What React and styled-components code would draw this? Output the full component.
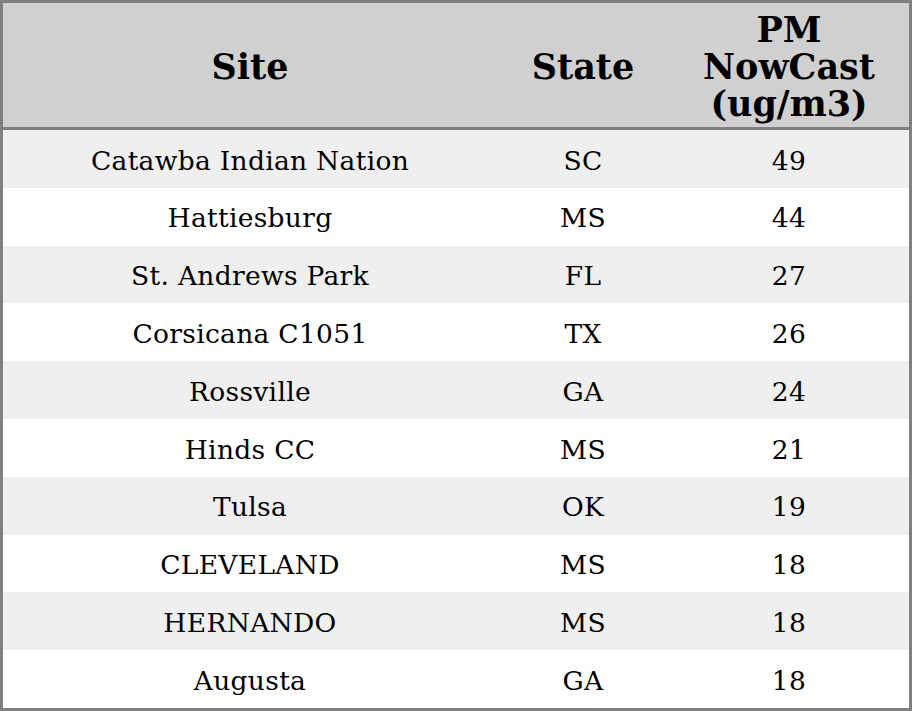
import React from "react";
import styled, { createGlobalStyle } from "styled-components";

const Global = createGlobalStyle`
  html, body { margin: 0; padding: 0; background: #fff; }
  * { box-sizing: border-box; }
`;

const rows = [
  ["Catawba Indian Nation", "SC", "49"],
  ["Hattiesburg", "MS", "44"],
  ["St. Andrews Park", "FL", "27"],
  ["Corsicana C1051", "TX", "26"],
  ["Rossville", "GA", "24"],
  ["Hinds CC", "MS", "21"],
  ["Tulsa", "OK", "19"],
  ["CLEVELAND", "MS", "18"],
  ["HERNANDO", "MS", "18"],
  ["Augusta", "GA", "18"],
];

const Table = styled.div`
  width: 912px;
  height: 711px;
  border: 3px solid #808080;
  display: grid;
  grid-template-rows: 127px repeat(10, 1fr);
  font-family: "DejaVu Serif", serif;
  color: #000;
`;

const Row = styled.div`
  display: grid;
  grid-template-columns: 494px 172px 1fr;
  background: ${(p) => (p.$head ? "#d0d0d0" : p.$alt ? "#efefef" : "#ffffff")};
  border-bottom: ${(p) => (p.$head ? "3px solid #808080" : "none")};
`;

const Cell = styled.div`
  display: flex;
  align-items: center;
  justify-content: center;
  text-align: center;
  font-size: ${(p) => (p.$head ? "35px" : "26.5px")};
  font-weight: ${(p) => (p.$head ? 700 : 400)};
  letter-spacing: ${(p) => (p.$head ? "0" : "0.3px")};
  line-height: ${(p) => (p.$head ? "37px" : "1")};
  padding-top: ${(p) => (p.$head ? "2px" : "4px")};
`;

export default function App() {
  return (
    <>
      <Global />
      <Table>
        <Row $head>
          <Cell $head>Site</Cell>
          <Cell $head>State</Cell>
          <Cell $head>
            PM
            <br />
            NowCast
            <br />
            (ug/m3)
          </Cell>
        </Row>
        {rows.map((r, i) => (
          <Row key={i} $alt={i % 2 === 0}>
            <Cell>{r[0]}</Cell>
            <Cell>{r[1]}</Cell>
            <Cell>{r[2]}</Cell>
          </Row>
        ))}
      </Table>
    </>
  );
}
